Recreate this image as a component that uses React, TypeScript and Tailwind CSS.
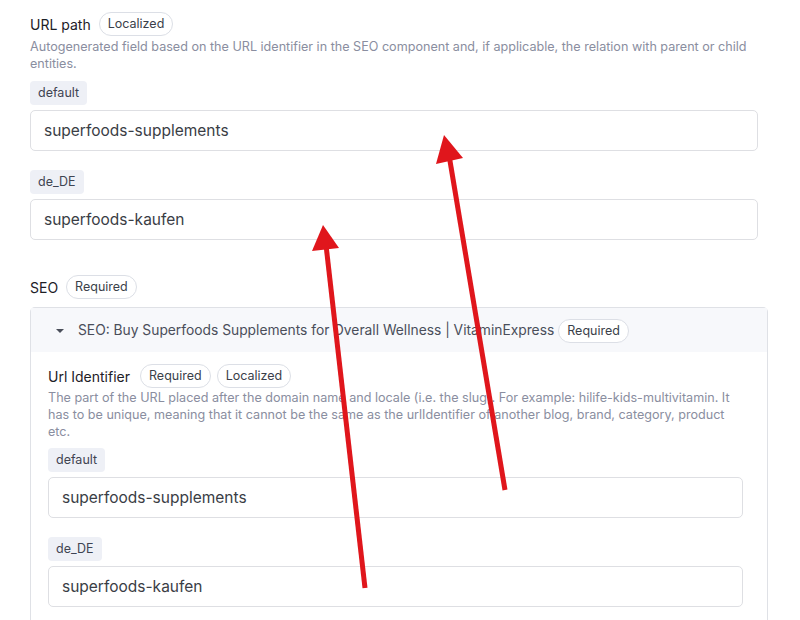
import React from "react";

const Badge = ({ children }: { children: React.ReactNode }) => (
  <span className="inline-flex h-[24px] items-center rounded-full border border-[#dcdfe6] bg-white px-[8px] text-[12.5px] text-[#3b3f4a]">
    {children}
  </span>
);

const LocaleTag = ({ children }: { children: React.ReactNode }) => (
  <span className="inline-flex h-[24px] w-max items-center rounded-[4px] bg-[#eef0f6] px-[8px] text-[12.5px] text-[#3f4452]">
    {children}
  </span>
);

const Field = ({ locale, value }: { locale: string; value: string }) => (
  <div className="flex flex-col gap-[5px]">
    <LocaleTag>{locale}</LocaleTag>
    <div className="flex h-[41px] items-center rounded-[5px] border border-[#dedfe3] bg-white px-[13px] text-[15.5px] text-[#3a3d45]">
      {value}
    </div>
  </div>
);

// red annotation arrows painted over the form
const Arrows = () => (
  <svg className="pointer-events-none absolute inset-0" width="800" height="620">
    <line x1="505" y1="490" x2="449" y2="155" stroke="#e0161c" strokeWidth="5" />
    <polygon points="444,135 436,164 463,158" fill="#e0161c" />
    <line x1="365" y1="588" x2="326" y2="245" stroke="#e0161c" strokeWidth="5" />
    <polygon points="323,225 312,251 339,248" fill="#e0161c" />
  </svg>
);

export default function App() {
  return (
    <div
      className="relative h-[620px] w-[800px] overflow-hidden bg-white"
      style={{ fontFamily: "Inter, 'Noto Sans', sans-serif" }}
    >
      <div className="flex flex-col pl-[30px] pr-[42px] pt-[12px]">
        {/* URL path */}
        <div className="flex items-center gap-[8px]">
          <span className="text-[14px] text-[#1d2027]">URL path</span>
          <Badge>Localized</Badge>
        </div>
        <p className="mt-[2px] text-[12.6px] leading-[17px] text-[#8a8ea0]">
          Autogenerated field based on the URL identifier in the SEO component and, if applicable, the relation with parent or child entities.
        </p>
        <div className="mt-[9px] flex flex-col gap-[19px]">
          <Field locale="default" value="superfoods-supplements" />
          <Field locale="de_DE" value="superfoods-kaufen" />
        </div>

        {/* SEO */}
        <div className="mt-[35px] flex items-center gap-[8px]">
          <span className="text-[14px] text-[#1d2027]">SEO</span>
          <Badge>Required</Badge>
        </div>
        <div className="mt-[8px] -mr-[10px] rounded-t-[5px] border border-b-0 border-[#dfe1e6]">
          <div className="flex h-[44px] items-center gap-[8px] bg-[#f7f8fb] pl-[24px]">
            <svg width="10" height="6" viewBox="0 0 10 6" className="mr-[5px] mt-[2px]">
              <polygon points="1,1 9,1 5,5" fill="#4a4e5a" />
            </svg>
            <span className="text-[13.8px] text-[#4a4e5a]">
              SEO: Buy Superfoods Supplements for Overall Wellness | VitaminExpress
            </span>
            <span className="-ml-[4px]">
              <Badge>Required</Badge>
            </span>
          </div>
          <div className="flex flex-col pl-[17px] pr-[24px] pt-[12px] pb-[20px]">
            <div className="flex items-center gap-[6px]">
              <span className="mr-[4px] text-[14px] text-[#1d2027]">Url Identifier</span>
              <Badge>Required</Badge>
              <Badge>Localized</Badge>
            </div>
            <p className="mt-[1px] text-[12.6px] leading-[17px] text-[#8a8ea0]">
              The part of the URL placed after the domain name and locale (i.e. the slug). For example: hilife-kids-multivitamin. It has to be unique, meaning that it cannot be the same as the urlIdentifier of another blog, brand, category, product etc.
            </p>
            <div className="mt-[8px] flex flex-col gap-[19px]">
              <Field locale="default" value="superfoods-supplements" />
              <Field locale="de_DE" value="superfoods-kaufen" />
            </div>
          </div>
        </div>
      </div>
      <Arrows />
    </div>
  );
}
